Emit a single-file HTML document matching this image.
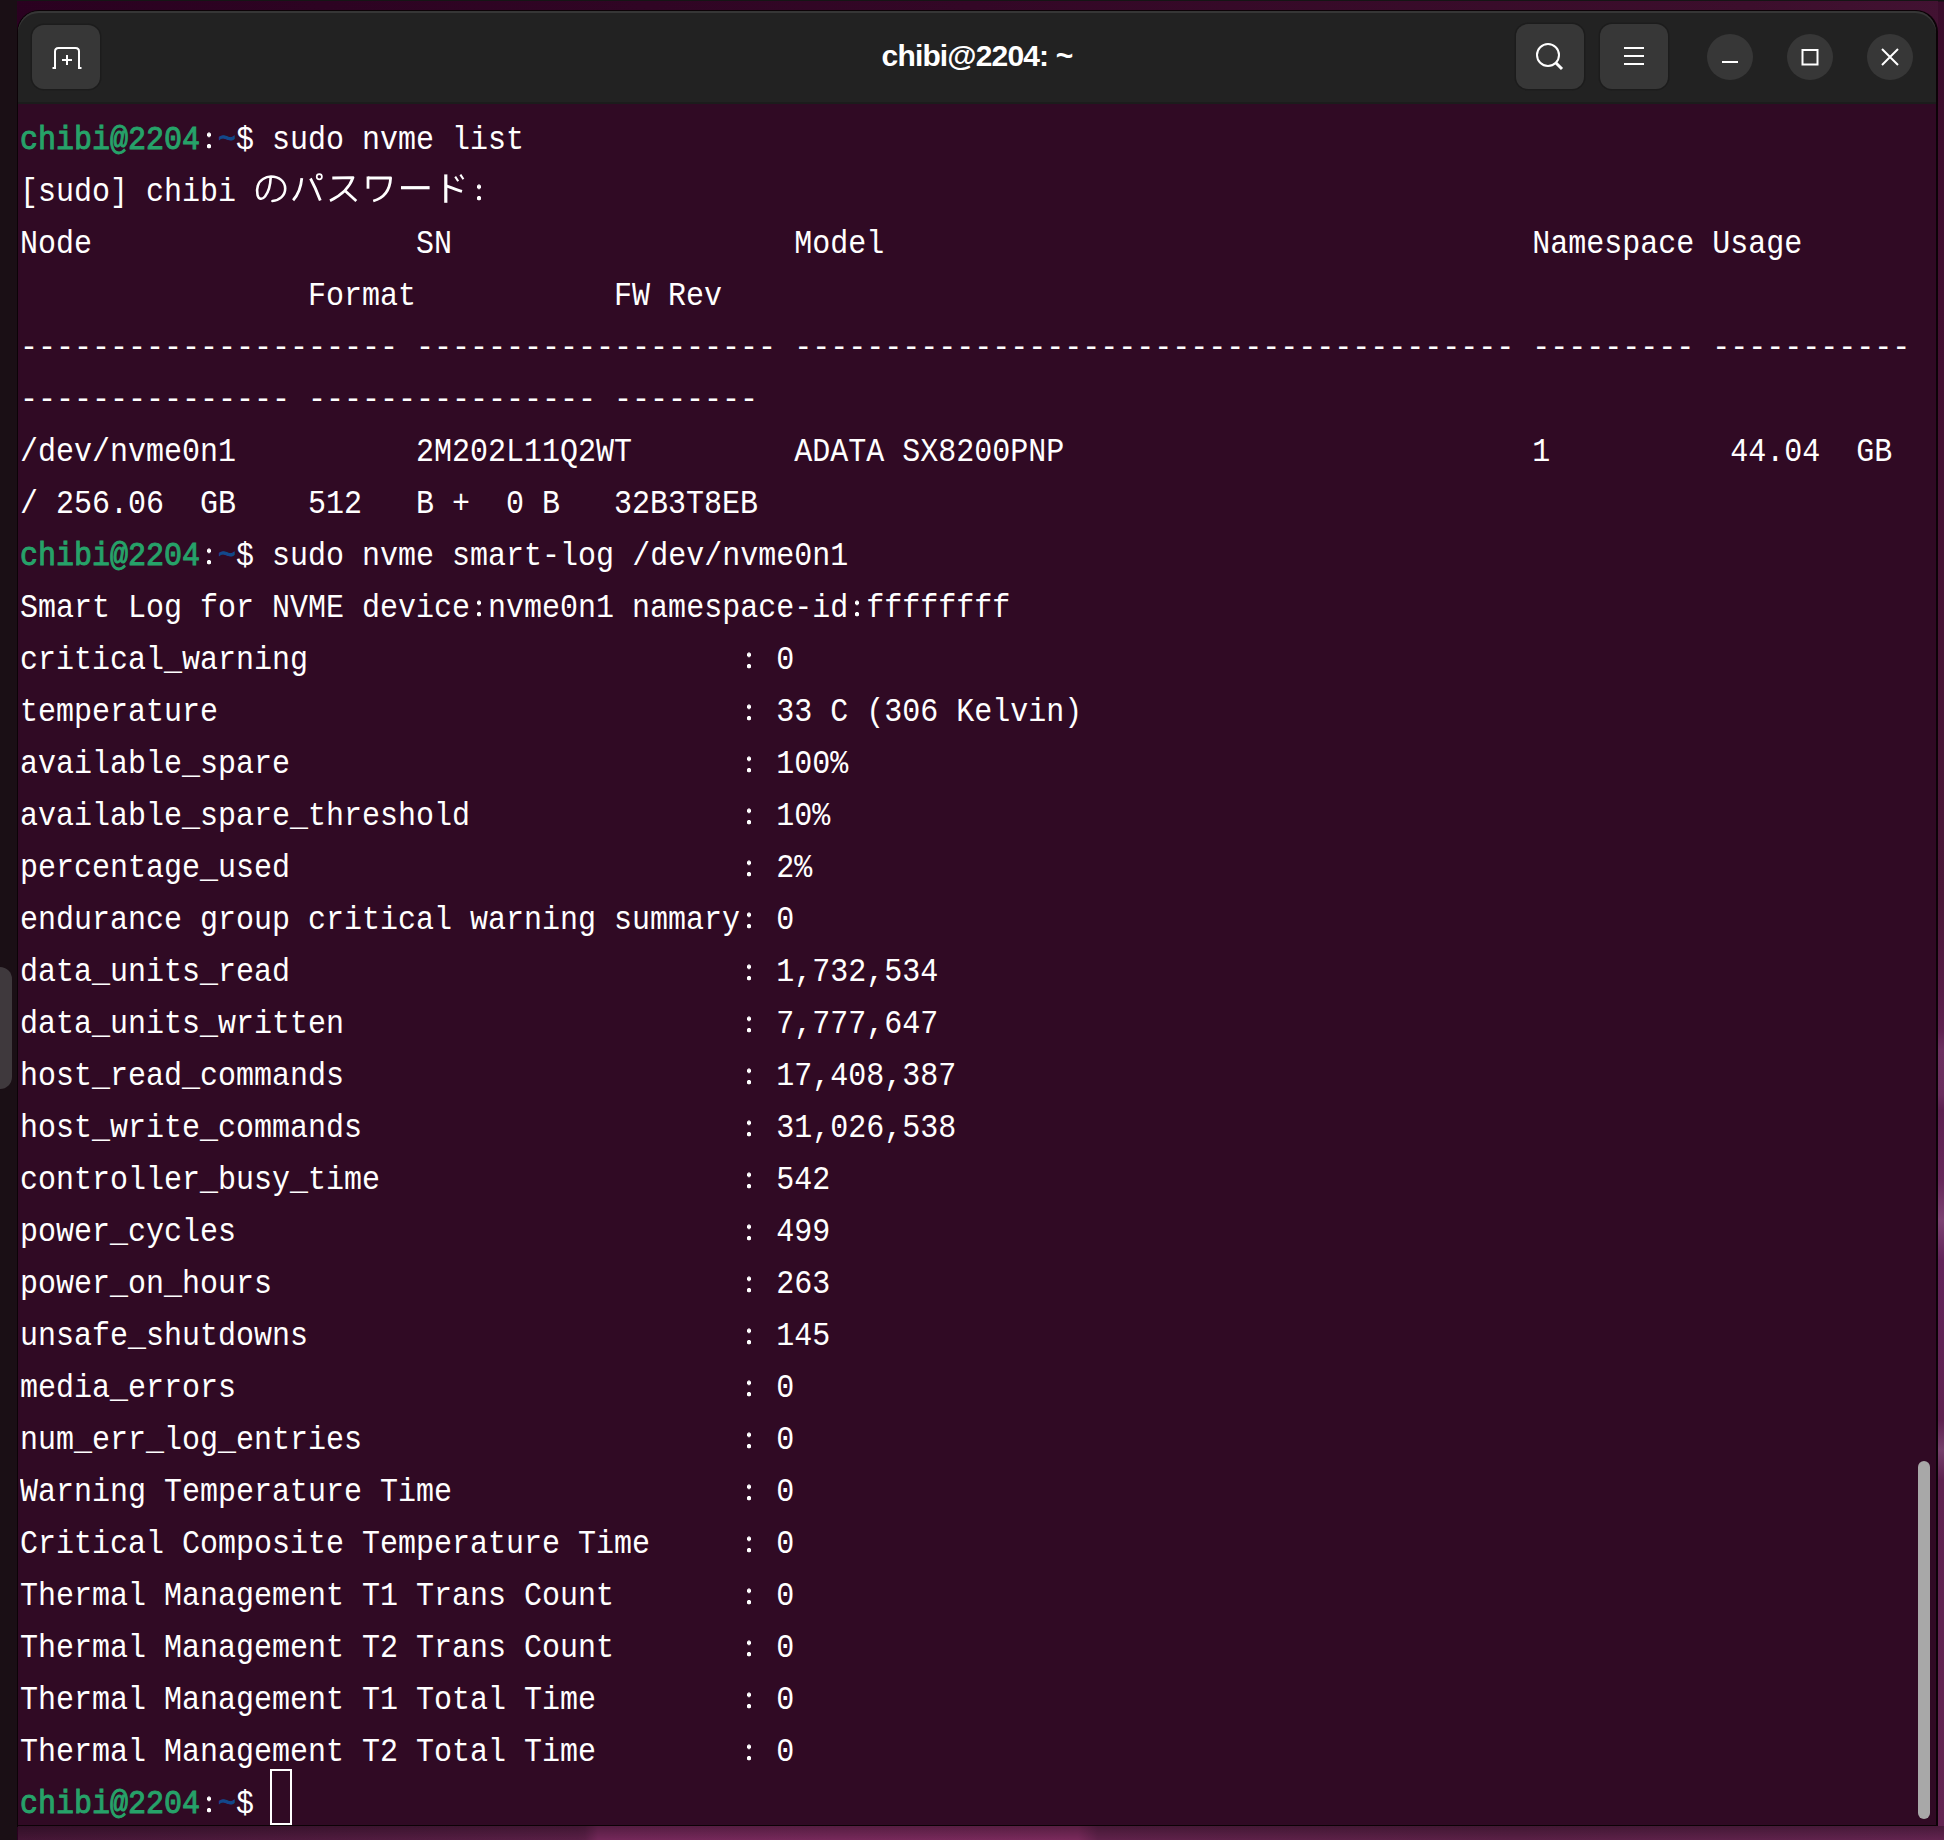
<!DOCTYPE html>
<html><head><meta charset="utf-8">
<style>
html,body{margin:0;padding:0;}
body{width:1944px;height:1840px;position:relative;overflow:hidden;background:linear-gradient(90deg,#2a0120 0%,#330726 50%,#3c0e2c 90%,#421232 100%);font-family:"Liberation Sans",sans-serif;}
.leftstrip{position:absolute;left:0;top:0;width:17px;height:1840px;background:#1a0f15;}
.topline{position:absolute;left:0;top:0;width:1944px;height:1px;background:#151515;}
.bottomwp{position:absolute;left:18px;top:1826px;width:1926px;height:14px;background:linear-gradient(180deg,rgba(0,0,0,0.28),rgba(0,0,0,0) 100%),linear-gradient(90deg,#451636 0px,#591f46 560px,#5c2048 567px,#74285a 580px,#7a2a5c 1060px,#60224b 1080px,#5a2046 1500px,#632450 1926px);}
.rightwp{position:absolute;left:1938px;top:0;width:6px;height:1826px;background:linear-gradient(180deg,#131313 0px,#131313 1px,#3a0d2b 2px,#420f31 300px,#4a1838 900px,#561d46 990px,#5e2250 1030px,#6c3060 1050px,#6a2e5e 1095px,#5c2150 1110px,#66285a 1180px,#7c4272 1220px,#62245a 1260px,#5e2250 1420px,#76406c 1450px,#5e2250 1480px,#632552 1826px);}
.dock{position:absolute;left:-14px;top:967px;width:26px;height:122px;border-radius:12px;background:#3f393d;}
.win{position:absolute;left:17px;top:10px;width:1921px;height:1817px;background:#0c0307;border-radius:22px 22px 0 0;}
.title{position:absolute;left:18px;top:11px;width:1918px;height:93px;background:#222222;border-radius:21px 21px 0 0;box-shadow:inset 0 2px 0 #363636;}
.titlesep{position:absolute;left:18px;top:102px;width:1918px;height:2px;background:#1c1c1c;}
.term{position:absolute;left:18px;top:104px;width:1918px;height:1721px;background:#300a24;}
.ttl{position:absolute;left:5px;top:36px;width:1944px;text-align:center;color:#fff;font-weight:bold;font-size:30px;line-height:40px;letter-spacing:-0.85px;}
.btn{position:absolute;background:#373737;border-radius:12px;box-shadow:0 0 0 1.5px #1c1c1c;}
.cbtn{position:absolute;background:#373737;border-radius:50%;}
.ln{position:absolute;left:20px;height:52px;line-height:52px;font-family:"Liberation Mono",monospace;font-size:30px;color:#fff;white-space:pre;transform:scaleY(1.1);transform-origin:0 34px;}
.ln b{font-weight:normal;-webkit-text-stroke:0.9px currentColor;}
.c{color:transparent;background:radial-gradient(2.5px 2.3px at 9px 12.1px,#fff 75%,rgba(255,255,255,0) 100%),radial-gradient(2.5px 2.3px at 9px 22.45px,#fff 75%,rgba(255,255,255,0) 100%);}
.cursor{position:absolute;left:270px;top:1769px;width:18px;height:52px;border:2px solid #fff;}
.sb{position:absolute;left:1918px;top:1461px;width:12px;height:358px;border-radius:6px;background:#a8a8a8;}
svg{position:absolute;left:0;top:0;}
</style></head><body>
<div class="topline"></div>
<div class="win"></div>
<div class="leftstrip"><div class="dock"></div></div>
<div class="bottomwp"></div>
<div class="rightwp"></div>
<div class="title"></div>
<div class="titlesep"></div>
<div class="term"></div>
<div class="ttl">chibi@2204: ~</div>
<div class="btn" style="left:32px;top:25px;width:68px;height:64px;"></div>
<div class="btn" style="left:1516px;top:24px;width:68px;height:65px;"></div>
<div class="btn" style="left:1600px;top:24px;width:68px;height:65px;"></div>
<div class="cbtn" style="left:1707px;top:34px;width:46px;height:46px;"></div>
<div class="cbtn" style="left:1787px;top:34px;width:46px;height:46px;"></div>
<div class="cbtn" style="left:1867px;top:34px;width:46px;height:46px;"></div>
<svg width="1944" height="120" viewBox="0 0 1944 120" fill="none" stroke="#fff" stroke-width="2">
<path d="M52.5 68 L55 68 L55 51.5 Q55 48 58.5 48 L75.5 48 Q79 48 79 51.5 L79 68 L81.5 68"/>
<path d="M67 55 L67 65 M62 60 L72 60"/>
<circle cx="1548" cy="55" r="11"/>
<path d="M1556 63 L1562 69" stroke-width="3"/>
<path d="M1624 48 L1644 48 M1624 56 L1644 56 M1624 64 L1644 64"/>
<path d="M1722 62 L1738 62"/>
<rect x="1802.5" y="50" width="15" height="14.5"/>
<path d="M1882 49 L1898 65 M1898 49 L1882 65"/>
</svg>
<div class="ln" style="top:115px"><b style="color:#26a269">chibi@2204</b><span class="c">:</span><b style="color:#12488b">~</b><span>$ sudo nvme list</span></div>
<div class="ln" style="top:167px">[sudo] chibi             <span class="c">:</span></div>
<div class="ln" style="top:219px">Node                  SN                   Model                                    Namespace Usage</div>
<div class="ln" style="top:271px">                Format           FW Rev</div>
<div class="ln" style="top:323px">--------------------- -------------------- ---------------------------------------- --------- -----------</div>
<div class="ln" style="top:375px">--------------- ---------------- --------</div>
<div class="ln" style="top:427px">/dev/nvme0n1          2M202L11Q2WT         ADATA SX8200PNP                          1          44.04  GB</div>
<div class="ln" style="top:479px">/ 256.06  GB    512   B +  0 B   32B3T8EB</div>
<div class="ln" style="top:531px"><b style="color:#26a269">chibi@2204</b><span class="c">:</span><b style="color:#12488b">~</b><span>$ sudo nvme smart-log /dev/nvme0n1</span></div>
<div class="ln" style="top:583px">Smart Log for NVME device<span class="c">:</span>nvme0n1 namespace-id<span class="c">:</span>ffffffff</div>
<div class="ln" style="top:635px">critical_warning                        <span class="c">:</span> 0</div>
<div class="ln" style="top:687px">temperature                             <span class="c">:</span> 33 C (306 Kelvin)</div>
<div class="ln" style="top:739px">available_spare                         <span class="c">:</span> 100%</div>
<div class="ln" style="top:791px">available_spare_threshold               <span class="c">:</span> 10%</div>
<div class="ln" style="top:843px">percentage_used                         <span class="c">:</span> 2%</div>
<div class="ln" style="top:895px">endurance group critical warning summary<span class="c">:</span> 0</div>
<div class="ln" style="top:947px">data_units_read                         <span class="c">:</span> 1,732,534</div>
<div class="ln" style="top:999px">data_units_written                      <span class="c">:</span> 7,777,647</div>
<div class="ln" style="top:1051px">host_read_commands                      <span class="c">:</span> 17,408,387</div>
<div class="ln" style="top:1103px">host_write_commands                     <span class="c">:</span> 31,026,538</div>
<div class="ln" style="top:1155px">controller_busy_time                    <span class="c">:</span> 542</div>
<div class="ln" style="top:1207px">power_cycles                            <span class="c">:</span> 499</div>
<div class="ln" style="top:1259px">power_on_hours                          <span class="c">:</span> 263</div>
<div class="ln" style="top:1311px">unsafe_shutdowns                        <span class="c">:</span> 145</div>
<div class="ln" style="top:1363px">media_errors                            <span class="c">:</span> 0</div>
<div class="ln" style="top:1415px">num_err_log_entries                     <span class="c">:</span> 0</div>
<div class="ln" style="top:1467px">Warning Temperature Time                <span class="c">:</span> 0</div>
<div class="ln" style="top:1519px">Critical Composite Temperature Time     <span class="c">:</span> 0</div>
<div class="ln" style="top:1571px">Thermal Management T1 Trans Count       <span class="c">:</span> 0</div>
<div class="ln" style="top:1623px">Thermal Management T2 Trans Count       <span class="c">:</span> 0</div>
<div class="ln" style="top:1675px">Thermal Management T1 Total Time        <span class="c">:</span> 0</div>
<div class="ln" style="top:1727px">Thermal Management T2 Total Time        <span class="c">:</span> 0</div>
<div class="ln" style="top:1779px"><b style="color:#26a269">chibi@2204</b><span class="c">:</span><b style="color:#12488b">~</b><span>$ </span></div>
<svg class="jp" width="1944" height="1840" viewBox="0 0 1944 1840" fill="none" stroke="#fff" stroke-width="2.8" stroke-linecap="butt" stroke-linejoin="round">
<path stroke-linecap="round" stroke-width="2.6" d="M270.7 177 C270.5 184 268.5 192 265 196.5 C262 200 258.5 199.5 257.5 195 C256 189 258 182 263 179 C266 177 268 176.5 271 176.5 C279 176.5 285.2 181.5 285.2 188.5 C285.2 196 279 200.5 272.4 201"/>
<path d="M301.8 178.2 C301 187 298 195 293.1 200.3"/>
<path d="M310.5 178.5 C314 185 317.5 193 320.3 200.5"/>
<circle cx="319.3" cy="176.8" r="2.6" stroke-width="1.7"/>
<path d="M332.3 178 L353 177.6 C350 186 342 195 330 200.8"/>
<path d="M344.8 190.5 L356.3 201"/>
<path d="M368 176.5 L368 188.7"/>
<path d="M368 178 L390.6 178 C390 190 384 198 373.2 201"/>
<path d="M401 187.7 L429.6 187.7" stroke-width="3.2"/>
<path d="M445.8 174.4 L445.8 202.8" stroke-width="3.2"/>
<path d="M446 185.8 C451 187.5 457 190 462 191.4"/>
<path d="M455.2 176.6 L458.2 181.2" stroke-width="2.1"/>
<path d="M460.4 174.6 L463.4 179.2" stroke-width="2.1"/>
</svg>
<div class="cursor"></div>
<div class="sb"></div>
</body></html>
